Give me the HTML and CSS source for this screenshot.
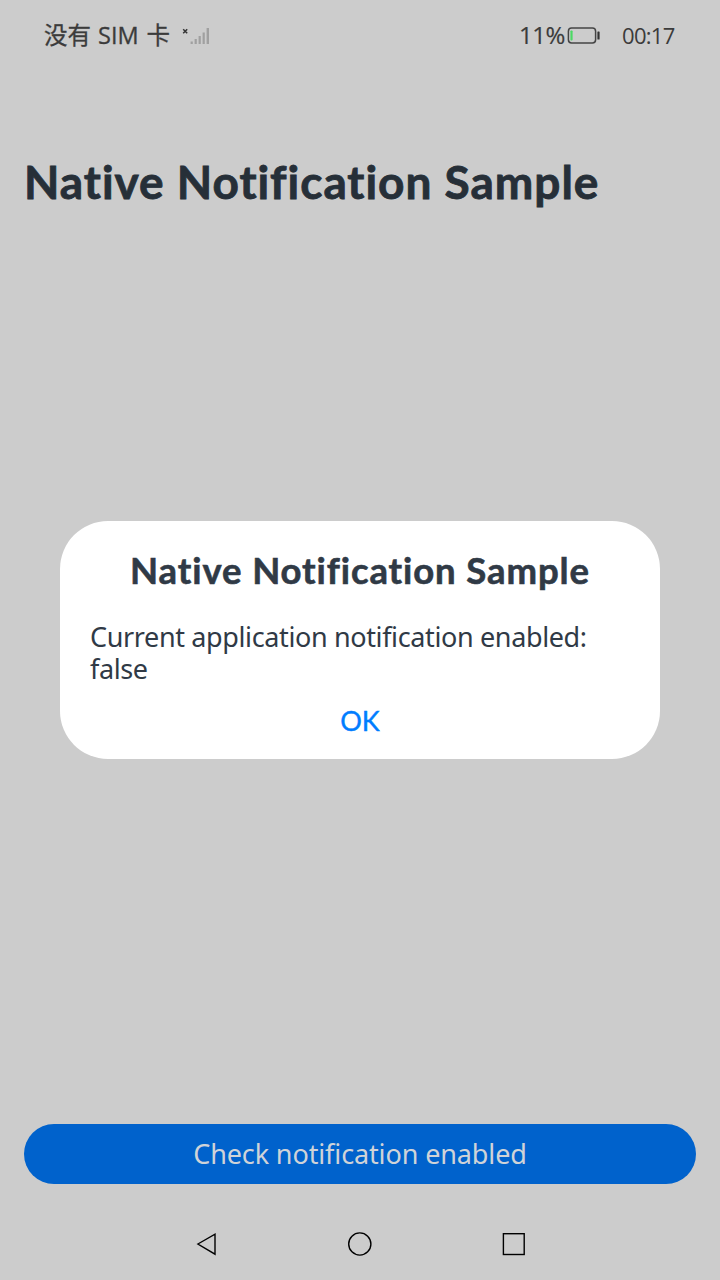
FILE: index.html
```html
<!DOCTYPE html>
<html lang="en">
<head>
<meta charset="utf-8">
<title>Native Notification Sample</title>
<link rel="stylesheet" href="styles.css">
</head>
<body>
<div class="screen">
  <header class="status-bar">
    <span class="carrier"><span>没有</span><span class="sim">SIM</span><span>卡</span></span>
    <svg class="signal" width="28" height="18" viewBox="0 0 28 18">
      <path class="signal-cross" d="M1.2 2.2l4 4M5.2 2.2l-4 4"/>
      <path class="signal-bars" d="M8.6 14.6h2.2V17H8.6zM12.6 12h2.2v5h-2.2zM16.6 9h2.2v8h-2.2zM20.6 5.5h2.2V17h-2.2zM24.6 1H27v16h-2.4z"/>
    </svg>
    <span class="percent">11%</span>
    <svg class="battery" width="33" height="18" viewBox="0 0 33 18">
      <rect class="battery-case" x="1.4" y="1" width="27.2" height="15" rx="3.2"/>
      <rect class="battery-level" x="3.4" y="3.4" width="2.2" height="10.2" rx="0.8"/>
      <rect class="battery-tip" x="30.4" y="4.5" width="2.2" height="8" rx="0.6"/>
    </svg>
    <time class="clock">00:17</time>
  </header>
  <main class="page">
    <h1 class="page-title">Native Notification Sample</h1>
    <button class="check-button"><span>Check notification enabled</span></button>
  </main>
  <nav class="nav-bar">
    <svg width="26" height="26" viewBox="0 0 26 26"><path d="M3.9 13L21 3.2v20z"/></svg>
    <svg width="26" height="26" viewBox="0 0 26 26"><circle cx="12.8" cy="13" r="11.1"/></svg>
    <svg width="26" height="26" viewBox="0 0 26 26"><rect x="2.4" y="2.7" width="20.8" height="20.8"/></svg>
  </nav>
  <div class="overlay">
    <section class="dialog" role="dialog">
      <h2 class="dialog-title">Native Notification Sample</h2>
      <p class="dialog-message">Current application notification enabled: false</p>
      <button class="ok-button">OK</button>
    </section>
  </div>
</div>
</body>
</html>
```
FILE: styles.css
```css
* { box-sizing: border-box; }

body {
  margin: 0;
  font-family: "Noto Sans", "Noto Sans CJK SC", sans-serif;
}

h1, h2, p { margin: 0; }

button {
  border: 0;
  font-family: inherit;
  white-space: nowrap;
}

.screen {
  position: relative;
  display: flex;
  flex-direction: column;
  height: 1280px;
  overflow: hidden;
  background: #ccc;
}

.status-bar {
  display: flex;
  align-items: center;
  height: 72px;
  padding: 0 45px 0 44px;
  color: #3b3b3b;
  font-family: "Open Sans", "Noto Sans CJK SC", sans-serif;
  line-height: 32px;
  white-space: nowrap;
}

.carrier {
  display: flex;
  gap: 7px;
  width: 126px;
  margin-top: -2px;
  font-size: 23.5px;
  -webkit-text-stroke: 0.3px #3b3b3b;
}

.sim { width: 42px; }

.signal { margin: 0 auto 0 12px; }
.signal-cross { fill: none; stroke: #333; stroke-width: 1.5; }
.signal-bars { fill: #a0a0a0; }

.percent {
  margin-top: -2px;
  font-size: 24px;
  letter-spacing: -0.4px;
  -webkit-text-stroke: 0.2px #3b3b3b;
}

.battery { margin: 0 0 0 2px; }
.battery-case { fill: none; stroke: #444; stroke-width: 1.5; }
.battery-level { fill: #4bd964; }
.battery-tip { fill: #333; }

.clock {
  width: 53px;
  margin-top: -3px;
  margin-left: 22px;
  font-size: 22px;
  letter-spacing: -0.7px;
}

.page {
  display: flex;
  flex: 1;
  flex-direction: column;
  justify-content: space-between;
  padding: 79px 24px 24px;
}

.page-title,
.dialog-title {
  font-family: Lato, sans-serif;
  font-weight: 700;
  white-space: nowrap;
}

.page-title {
  color: #262f38;
  font-size: 46px;
  letter-spacing: 0.97px;
  line-height: 62px;
  -webkit-text-stroke: 0.8px #262f38;
}

.check-button {
  height: 60px;
  border-radius: 30px;
  background: #0062cc;
  color: #cfd3d8;
  font-size: 27px;
  letter-spacing: -0.12px;
  line-height: 36px;
}

.nav-bar {
  display: flex;
  justify-content: center;
  gap: 127.5px;
  height: 72px;
  padding-top: 23px;
  fill: none;
  stroke: #000;
  stroke-width: 1.4;
}

.overlay {
  position: absolute;
  inset: 0;
  display: flex;
  align-items: center;
  justify-content: center;
}

.dialog {
  display: flex;
  flex-direction: column;
  align-items: center;
  width: 600px;
  height: 238px;
  padding: 25px 30px 0;
  border-radius: 48px;
  background: #fff;
  color: #303a46;
}

.dialog-title {
  font-size: 36.5px;
  letter-spacing: 0.9px;
  line-height: 48px;
  -webkit-text-stroke: 0.6px #303a46;
}

.dialog-message {
  align-self: stretch;
  margin-top: 27px;
  font-size: 27px;
  letter-spacing: -0.37px;
  line-height: 32px;
}

.ok-button {
  height: 36px;
  margin-top: 18px;
  padding: 0;
  background: none;
  color: #007dff;
  font-family: Lato, sans-serif;
  font-size: 27px;
  line-height: 36px;
  -webkit-text-stroke: 0.4px #007dff;
}
```
